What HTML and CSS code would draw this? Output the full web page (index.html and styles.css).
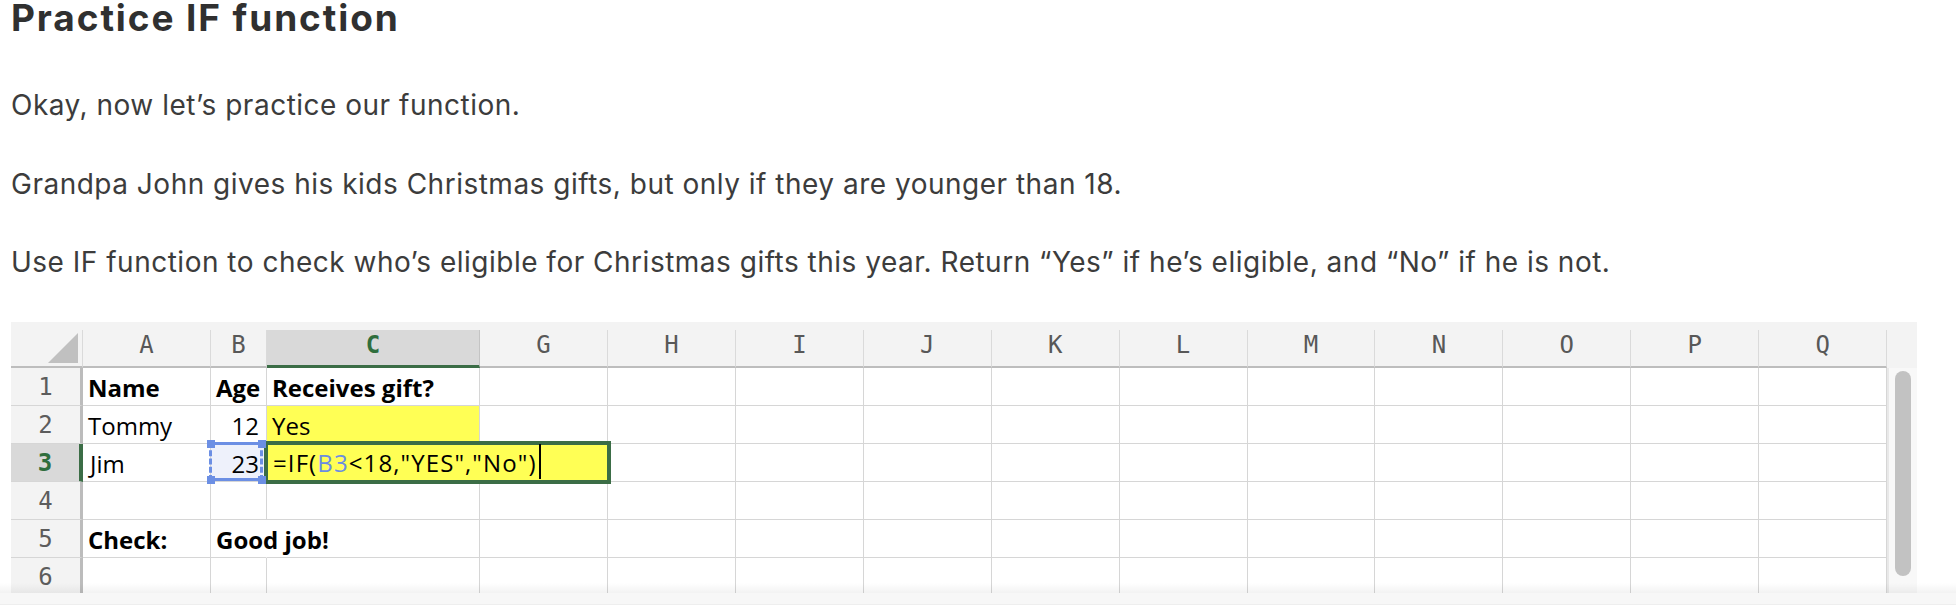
FILE: index.html
```html
<!DOCTYPE html>
<html lang="en">
<head>
<meta charset="utf-8">
<title>Practice IF function</title>
<link rel="stylesheet" href="styles.css">
</head>
<body>
<div class="page">
  <h1 class="title">Practice IF function</h1>
  <p class="para para-first">Okay, now let’s practice our function.</p>
  <p class="para">Grandpa John gives his kids Christmas gifts, but only if they are younger than 18.</p>
  <p class="para">Use IF function to check who’s eligible for Christmas gifts this year. Return “Yes” if he’s eligible, and “No” if he is not.</p>

  <div class="sheet">
    <div class="hdr-row">
      <div class="corner"><span class="tri"></span></div>
      <div class="ch col-a">A</div>
      <div class="ch col-b">B</div>
      <div class="ch col-c ch-sel">C</div>
      <div class="ch col-g">G</div>
      <div class="ch col-f">H</div>
      <div class="ch col-f">I</div>
      <div class="ch col-f">J</div>
      <div class="ch col-f">K</div>
      <div class="ch col-f">L</div>
      <div class="ch col-f">M</div>
      <div class="ch col-f">N</div>
      <div class="ch col-f">O</div>
      <div class="ch col-f">P</div>
      <div class="ch col-f">Q</div>
      <div class="ch-end"></div>
    </div>
    <div class="sheet-body">
      <div class="rows">
        <div class="row">
          <div class="rh">1</div>
          <div class="cell col-a bold">Name</div>
          <div class="cell col-b bold">Age</div>
          <div class="cell col-c bold">Receives gift?</div>
          <div class="cell col-g"></div>
          <div class="cell col-f"></div><div class="cell col-f"></div><div class="cell col-f"></div><div class="cell col-f"></div><div class="cell col-f"></div>
          <div class="cell col-f"></div><div class="cell col-f"></div><div class="cell col-f"></div><div class="cell col-f"></div><div class="cell col-f"></div>
        </div>
        <div class="row">
          <div class="rh">2</div>
          <div class="cell col-a">Tommy</div>
          <div class="cell col-b num">12</div>
          <div class="cell col-c yellow">Yes</div>
          <div class="cell col-g"></div>
          <div class="cell col-f"></div><div class="cell col-f"></div><div class="cell col-f"></div><div class="cell col-f"></div><div class="cell col-f"></div>
          <div class="cell col-f"></div><div class="cell col-f"></div><div class="cell col-f"></div><div class="cell col-f"></div><div class="cell col-f"></div>
        </div>
        <div class="row">
          <div class="rh rh-sel">3</div>
          <div class="cell col-a cell-j">Jim</div>
          <div class="cell col-b num refcell">23
            <span class="refbox"></span>
            <span class="handle h-tl"></span>
            <span class="handle h-tr"></span>
            <span class="handle h-bl"></span>
            <span class="handle h-br"></span>
          </div>
          <div class="cell col-c editcell">
            <div class="editor">=IF(<span class="ref">B3</span>&lt;18,"YES","No")<span class="caret"></span></div>
          </div>
          <div class="cell col-g"></div>
          <div class="cell col-f"></div><div class="cell col-f"></div><div class="cell col-f"></div><div class="cell col-f"></div><div class="cell col-f"></div>
          <div class="cell col-f"></div><div class="cell col-f"></div><div class="cell col-f"></div><div class="cell col-f"></div><div class="cell col-f"></div>
        </div>
        <div class="row">
          <div class="rh">4</div>
          <div class="cell col-a"></div>
          <div class="cell col-b"></div>
          <div class="cell col-c"></div>
          <div class="cell col-g"></div>
          <div class="cell col-f"></div><div class="cell col-f"></div><div class="cell col-f"></div><div class="cell col-f"></div><div class="cell col-f"></div>
          <div class="cell col-f"></div><div class="cell col-f"></div><div class="cell col-f"></div><div class="cell col-f"></div><div class="cell col-f"></div>
        </div>
        <div class="row">
          <div class="rh">5</div>
          <div class="cell col-a bold">Check:</div>
          <div class="cell col-b bold spill">Good job!</div>
          <div class="cell col-c"></div>
          <div class="cell col-g"></div>
          <div class="cell col-f"></div><div class="cell col-f"></div><div class="cell col-f"></div><div class="cell col-f"></div><div class="cell col-f"></div>
          <div class="cell col-f"></div><div class="cell col-f"></div><div class="cell col-f"></div><div class="cell col-f"></div><div class="cell col-f"></div>
        </div>
        <div class="row">
          <div class="rh">6</div>
          <div class="cell col-a"></div>
          <div class="cell col-b"></div>
          <div class="cell col-c"></div>
          <div class="cell col-g"></div>
          <div class="cell col-f"></div><div class="cell col-f"></div><div class="cell col-f"></div><div class="cell col-f"></div><div class="cell col-f"></div>
          <div class="cell col-f"></div><div class="cell col-f"></div><div class="cell col-f"></div><div class="cell col-f"></div><div class="cell col-f"></div>
        </div>
      </div>
      <div class="vscroll"><div class="thumb"></div></div>
    </div>
  </div>
  <div class="hscroll-shade"></div>
</div>
</body>
</html>
```

FILE: styles.css
```css
* { box-sizing: border-box; }

body {
  margin: 0;
  background: #ffffff;
}

.page {
  position: relative;
  padding-left: 11px;
  padding-top: 1px;
  min-height: 612px;
}

.title {
  margin: -1px 0 0;
  font-family: Inter, "Open Sans", sans-serif;
  font-weight: 700;
  font-size: 37px;
  line-height: 36px;
  letter-spacing: 1.9px;
  color: #303030;
}

.para {
  margin: 34.5px 0 0;
  font-family: Inter, "Open Sans", sans-serif;
  font-weight: 400;
  font-size: 28px;
  line-height: 44px;
  letter-spacing: 0.5px;
  color: #3c3c3c;
}

.para-first { margin-top: 47px; }

/* ---------- spreadsheet ---------- */
.sheet {
  margin-top: 38px;
  width: 1906px;
  height: 271px;
  overflow: hidden;
  display: flex;
  flex-direction: column;
}

.hdr-row {
  flex: none;
  display: flex;
  height: 46px;
  padding-top: 8px;
  background: #f3f3f3;
}

.corner {
  width: 72px;
  height: 38px;
  border-bottom: 2px solid #bdbdbd;
  border-right: 1px solid #dadada;
  display: flex;
  justify-content: flex-end;
  align-items: flex-end;
  padding: 0 4px 3px 0;
}

.tri {
  width: 30px;
  height: 30px;
  background: #c0c0c0;
  clip-path: polygon(100% 0, 100% 100%, 0 100%);
}

.ch {
  height: 38px;
  border-bottom: 2px solid #bdbdbd;
  border-right: 1px solid #dadada;
  text-align: center;
  font-family: "DejaVu Sans Mono", monospace;
  font-size: 24px;
  line-height: 31px;
  color: #585858;
}

.ch-sel {
  background: #d9d9d9;
  color: #2f6e3d;
  font-weight: bold;
  border-bottom: 3px solid #3b6d46;
  border-right-color: #c4c4c4;
}

.ch-end { width: 30px; }

.col-a { width: 128px; flex: none; }
.col-b { width: 56px; flex: none; }
.col-c { width: 213px; flex: none; }
.col-g { width: 128px; flex: none; }
.col-f { flex: 1 1 0; min-width: 0; }

.sheet-body {
  flex: 1;
  min-height: 0;
  display: flex;
}

.rows {
  width: 1876px;
  display: flex;
  flex-direction: column;
}

.row {
  flex: none;
  display: flex;
  height: 38px;
}

.rh {
  width: 72px;
  flex: none;
  background: #f3f3f3;
  border-right: 3px solid #bcbcbc;
  border-bottom: 1px solid #d6d6d6;
  text-align: center;
  font-family: "DejaVu Sans Mono", monospace;
  font-size: 24px;
  line-height: 33px;
  padding-top: 3px;
  color: #5c5c5c;
}

.rh-sel {
  background: #d9d9d9;
  color: #2f6e3d;
  font-weight: bold;
  border-right: 4px solid #3b6d46;
}

.cell {
  border-right: 1px solid #d6d6d6;
  border-bottom: 1px solid #d6d6d6;
  font-family: "Open Sans", "Liberation Sans", sans-serif;
  font-size: 24px;
  line-height: 33px;
  padding: 3px 4px 0 5px;
  white-space: nowrap;
  color: #000000;
}

.cell-j { padding-left: 7px; }

.bold { font-weight: 700; }

.num {
  text-align: right;
  padding-right: 7px;
}

.yellow { background: #ffff55; }

.spill { border-right-color: transparent; }

.refcell {
  position: relative;
  background: #eef1fb;
}

.refbox {
  position: absolute;
  left: -2px;
  top: -2px;
  width: 54px;
  height: 39px;
  border: 3px solid #6c8fe4;
  border-left-style: dashed;
  border-right-style: dashed;
}

.handle {
  position: absolute;
  width: 8px;
  height: 8px;
  background: #6c8fe4;
  z-index: 4;
}
.h-tl { left: -4px; top: -4px; }
.h-tr { left: 47px; top: -4px; }
.h-bl { left: -4px; top: 32px; }
.h-br { left: 47px; top: 32px; }

.editcell { position: relative; }

.editor {
  position: absolute;
  left: -3px;
  top: -3px;
  width: 347px;
  height: 43px;
  border: 4px solid #3b6d46;
  background: #ffff55;
  padding: 1px 0 0 5px;
  font-family: "Open Sans", "Liberation Sans", sans-serif;
  font-size: 24px;
  line-height: 33px;
  letter-spacing: 1.1px;
  white-space: nowrap;
  color: #000000;
  z-index: 3;
}

.ref { color: #6b8de2; }

.caret {
  display: inline-block;
  width: 2px;
  height: 35px;
  margin-left: 2px;
  margin-top: -2px;
  vertical-align: top;
  background: #000000;
}

.vscroll {
  width: 30px;
  flex: none;
  background: #f8f8f8;
  border-left: 2px solid #e8e8e8;
  padding: 3px 6px 0;
}

.thumb {
  width: 16px;
  height: 205px;
  border-radius: 8px;
  background: #c2c2c2;
}

.hscroll-shade {
  position: absolute;
  left: 0;
  right: 0;
  top: 583px;
  height: 22px;
  background: linear-gradient(to bottom,
    rgba(0, 0, 0, 0) 0px,
    rgba(0, 0, 0, 0.05) 10px,
    #f7f7f7 10px,
    #f7f7f7 21px,
    #eeeeee 21px,
    #eeeeee 22px);
}
```
